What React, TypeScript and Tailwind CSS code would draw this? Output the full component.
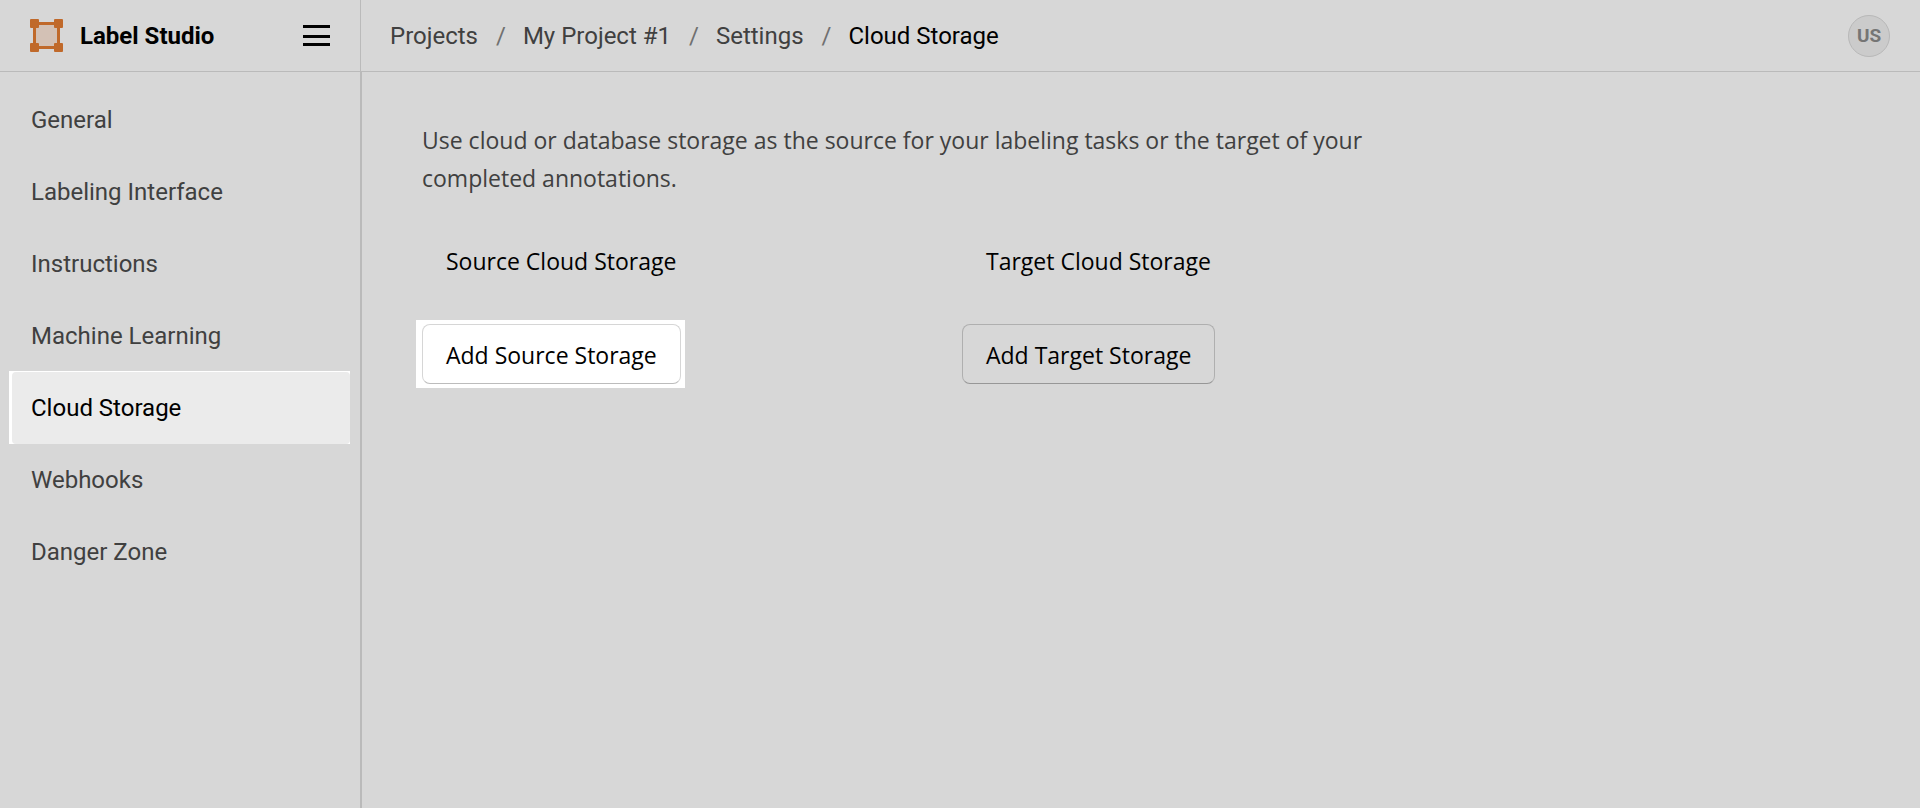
const navItems = [
  "General",
  "Labeling Interface",
  "Instructions",
  "Machine Learning",
  "Cloud Storage",
  "Webhooks",
  "Danger Zone",
];

const crumbs = ["Projects", "My Project #1", "Settings"];

function Logo() {
  return (
    <svg width="33" height="33" viewBox="0 0 33 33" aria-hidden="true">
      <rect x="4.5" y="4.5" width="24" height="24" fill="#d3c1b5" stroke="#c0692a" strokeWidth="3" />
      <g fill="#c0692a">
        <rect width="9" height="9" rx="1" />
        <rect x="24" width="9" height="9" rx="1" />
        <rect y="24" width="9" height="9" rx="1" />
        <rect x="24" y="24" width="9" height="9" rx="1" />
      </g>
    </svg>
  );
}

function MenuIcon() {
  return (
    <svg width="27" height="21" viewBox="0 0 27 21" aria-hidden="true">
      <path d="M0 0h27v3H0zM0 10h27v3H0zM0 18h27v3H0z" fill="#000" />
    </svg>
  );
}

function NavItem({ label, active }: { label: string; active: boolean }) {
  if (active) {
    return (
      <li className="-mt-px -ml-[3px] bg-white pt-px pl-[3px]">
        <a href="#" aria-current="page" className="flex h-[72px] items-center rounded-[4px] bg-[#ebebeb] px-[19px] text-black">
          {label}
        </a>
      </li>
    );
  }
  return (
    <li>
      <a href="#" className="flex h-[72px] items-center px-[19px]">
        {label}
      </a>
    </li>
  );
}

function StorageButton({ label, highlighted = false }: { label: string; highlighted?: boolean }) {
  const base = "h-[60px] rounded-lg border px-[23px] pt-[3px] text-black";
  if (highlighted) {
    return (
      <div className="-my-1 -ml-1.5 bg-white py-1 pr-1 pl-1.5">
        <button type="button" className={`${base} block border-[#d6d6d6] border-b-[#bcbcbc]`}>
          {label}
        </button>
      </div>
    );
  }
  return (
    <button type="button" className={`${base} border-[#afafaf] border-b-[#979797]`}>
      {label}
    </button>
  );
}

function StorageColumn({ title, action, highlighted }: { title: string; action: string; highlighted?: boolean }) {
  return (
    <section className="flex w-[540px] flex-col items-start">
      <h2 className="mb-[47px] px-6 leading-8 text-black">{title}</h2>
      <StorageButton label={action} highlighted={highlighted} />
    </section>
  );
}

export default function App() {
  return (
    <div className="flex min-h-screen flex-col bg-[#d7d7d7] font-[Roboto,sans-serif] text-2xl text-[#404040]">
      <header className="flex h-[72px] border-b border-[#bababa]">
        <div className="flex w-[361px] shrink-0 items-center border-r border-[#bababa] px-[30px]">
          <Logo />
          <span className="ml-[17px] font-bold text-black">Label Studio</span>
          <button type="button" aria-label="Menu" className="ml-auto">
            <MenuIcon />
          </button>
        </div>
        <nav aria-label="Breadcrumb" className="flex flex-1 items-center pl-[29px]">
          <ol className="flex items-center">
            {crumbs.map((crumb) => (
              <li key={crumb} className="flex">
                <a href="#">{crumb}</a>
                <span className="pr-[17px] pl-[18px] text-[#707070]">/</span>
              </li>
            ))}
            <li aria-current="page" className="text-black">
              Cloud Storage
            </li>
          </ol>
        </nav>
        <button
          type="button"
          aria-label="User menu"
          className="mt-[15px] mr-[30px] flex size-[42px] items-center justify-center rounded-full border border-[#b8b8b8] bg-[#cbcbcb] text-[19px] font-bold text-[#757575]"
        >
          US
        </button>
      </header>
      <div className="flex flex-1">
        <aside className="w-[362px] shrink-0 border-r-2 border-[#bababa] pt-3 pr-2.5 pl-3">
          <nav aria-label="Settings">
            <ul>
              {navItems.map((item) => (
                <NavItem key={item} label={item} active={item === "Cloud Storage"} />
              ))}
            </ul>
          </nav>
        </aside>
        <main className="flex-1 px-[60px] pt-[49px] font-['Open_Sans',sans-serif] text-[23px]">
          <p className="max-w-[960px] leading-[38px]">
            Use cloud or database storage as the source for your labeling tasks or the target of your completed
            annotations.
          </p>
          <div className="mt-12 flex">
            <StorageColumn title="Source Cloud Storage" action="Add Source Storage" highlighted />
            <StorageColumn title="Target Cloud Storage" action="Add Target Storage" />
          </div>
        </main>
      </div>
    </div>
  );
}
